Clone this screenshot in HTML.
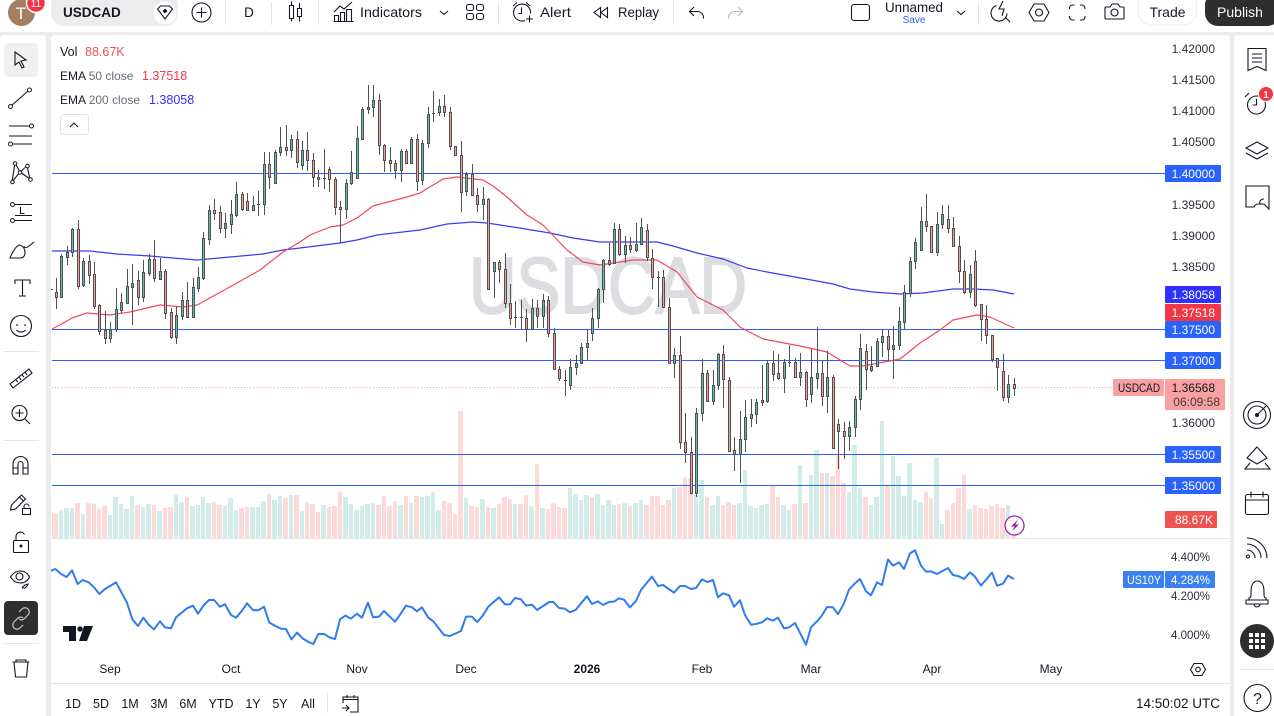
<!DOCTYPE html>
<html lang="en"><head><meta charset="utf-8"><title>USDCAD</title>
<style>
html,body{margin:0;padding:0;width:1274px;height:716px;overflow:hidden;background:#ececec}
svg{display:block}
text{font-family:"Liberation Sans",sans-serif;fill:#131722;font-size:12px}
.i{fill:none;stroke:#131722;stroke-width:1.1}
.n{fill:#fff;stroke:#131722;stroke-width:1}
.t{font-size:14px}
.tag{fill:#fff;font-size:12px;text-anchor:end}
.ax{text-anchor:end;font-size:12px;fill:#2a2e39}
.b{font-size:12.5px;text-anchor:middle}
.xl{font-size:12px;text-anchor:middle}
.lv{font-size:12.5px}
</style></head><body>
<svg width="1274" height="716" viewBox="0 0 1274 716" xmlns="http://www.w3.org/2000/svg">
<rect width="1274" height="716" fill="#ececec"/>
<rect width="1274" height="32" fill="#fff"/>
<rect x="0" y="35" width="46" height="690" rx="4" fill="#fff"/>
<rect x="51" y="35" width="1179" height="690" rx="4" fill="#fff"/>
<rect x="1234" y="35" width="48" height="690" rx="4" fill="#fff"/>

<!-- watermark -->
<text x="469" y="313" textLength="278" lengthAdjust="spacingAndGlyphs" style="font-size:80px;fill:#dcdde0;stroke:#dcdde0;stroke-width:2">USDCAD</text>

<!-- volume -->
<path fill="#d2ede9" d="M59 510h4V538h-4zM64 508h5V538h-5zM70 508h4V538h-4zM81 514h4V538h-4zM108 515h4V538h-4zM113 497h5V538h-5zM119 504h4V538h-4zM124 509h5V538h-5zM130 496h4V538h-4zM141 507h4V538h-4zM146 504h5V538h-5zM157 511h5V538h-5zM174 494h4V538h-4zM179 502h5V538h-5zM190 506h5V538h-5zM196 505h4V538h-4zM201 497h4V538h-4zM206 503h5V538h-5zM223 506h4V538h-4zM228 498h5V538h-5zM234 510h4V538h-4zM250 507h5V538h-5zM256 507h4V538h-4zM261 501h5V538h-5zM272 500h5V538h-5zM278 496h4V538h-4zM289 495h4V538h-4zM300 511h4V538h-4zM321 505h5V538h-5zM343 497h5V538h-5zM349 504h4V538h-4zM354 510h5V538h-5zM360 506h4V538h-4zM365 504h5V538h-5zM371 503h4V538h-4zM398 505h5V538h-5zM409 503h4V538h-4zM420 497h4V538h-4zM425 496h5V538h-5zM431 492h4V538h-4zM436 510h5V538h-5zM464 498h4V538h-4zM480 499h5V538h-5zM491 508h5V538h-5zM513 504h4V538h-4zM529 506h5V538h-5zM540 508h5V538h-5zM568 488h4V538h-4zM573 494h5V538h-5zM579 500h4V538h-4zM584 495h5V538h-5zM595 494h5V538h-5zM601 505h4V538h-4zM606 500h5V538h-5zM612 505h4V538h-4zM622 503h5V538h-5zM633 503h5V538h-5zM639 500h4V538h-4zM672 488h4V538h-4zM694 495h4V538h-4zM699 480h5V538h-5zM710 505h5V538h-5zM716 496h4V538h-4zM737 503h5V538h-5zM743 470h4V538h-4zM748 506h5V538h-5zM754 508h4V538h-4zM759 505h5V538h-5zM765 504h4V538h-4zM781 505h5V538h-5zM787 510h4V538h-4zM798 465h4V538h-4zM809 475h4V538h-4zM814 450h5V538h-5zM825 473h4V538h-4zM847 492h4V538h-4zM852 445h5V538h-5zM858 488h4V538h-4zM869 505h4V538h-4zM874 497h5V538h-5zM880 421h4V538h-4zM891 456h4V538h-4zM896 476h5V538h-5zM902 496h4V538h-4zM907 463h5V538h-5zM913 500h4V538h-4zM918 502h5V538h-5zM934 458h5V538h-5zM940 524h4V538h-4zM967 509h5V538h-5zM1006 505h4V538h-4z"/>
<path fill="#fcdad9" d="M52 512h1V538h-1zM53 514h5V538h-5zM75 503h5V538h-5zM86 503h5V538h-5zM92 504h4V538h-4zM97 509h4V538h-4zM102 506h5V538h-5zM135 505h5V538h-5zM152 505h4V538h-4zM163 508h4V538h-4zM168 507h5V538h-5zM185 497h4V538h-4zM212 502h4V538h-4zM217 505h5V538h-5zM239 508h5V538h-5zM245 507h4V538h-4zM267 494h4V538h-4zM283 498h5V538h-5zM294 495h5V538h-5zM305 502h4V538h-4zM310 504h5V538h-5zM316 512h4V538h-4zM327 507h4V538h-4zM332 506h5V538h-5zM338 492h4V538h-4zM376 505h5V538h-5zM382 496h4V538h-4zM387 506h5V538h-5zM393 501h4V538h-4zM404 496h4V538h-4zM414 496h5V538h-5zM442 501h4V538h-4zM447 503h5V538h-5zM453 514h4V538h-4zM458 411h5V538h-5zM469 506h5V538h-5zM475 507h4V538h-4zM486 507h4V538h-4zM497 504h4V538h-4zM502 497h5V538h-5zM508 499h4V538h-4zM518 504h5V538h-5zM524 495h4V538h-4zM535 464h4V538h-4zM546 509h4V538h-4zM551 503h5V538h-5zM557 507h4V538h-4zM562 508h5V538h-5zM590 497h4V538h-4zM617 504h4V538h-4zM628 506h4V538h-4zM644 505h5V538h-5zM650 496h4V538h-4zM655 496h5V538h-5zM661 505h4V538h-4zM666 500h5V538h-5zM677 487h5V538h-5zM683 477h4V538h-4zM688 479h5V538h-5zM705 497h4V538h-4zM721 505h4V538h-4zM726 502h5V538h-5zM732 505h4V538h-4zM770 485h5V538h-5zM776 497h4V538h-4zM792 504h5V538h-5zM803 503h5V538h-5zM820 473h4V538h-4zM830 476h5V538h-5zM836 456h4V538h-4zM841 483h5V538h-5zM863 497h5V538h-5zM885 485h5V538h-5zM924 492h4V538h-4zM929 498h4V538h-4zM945 510h5V538h-5zM951 503h4V538h-4zM956 488h5V538h-5zM962 475h4V538h-4zM973 505h4V538h-4zM978 508h5V538h-5zM984 509h4V538h-4zM989 506h5V538h-5zM995 504h4V538h-4zM1000 508h5V538h-5zM1011 534h5V538h-5z"/>

<!-- horizontal lines -->
<path stroke="#2962ff" stroke-width="1" fill="none" d="M52 173.5H1165M52 329.5H1165M52 360.5H1165M52 454.5H1165M52 485.5H1165"/>
<path stroke="#f5a5a5" stroke-width="1" stroke-dasharray="1 2" fill="none" d="M52 387.5H1112"/>
<path stroke="#e4e5e8" stroke-width="1" fill="none" d="M51 538.5H1230M51 683.5H1230"/>

<!-- EMAs -->
<polyline fill="none" stroke="#3a3af5" stroke-width="1.2" stroke-linejoin="round" points="52,251 90,251 117,254 150,256 173,258 197,260 230,257 263,254 283,250 300,248 340,243 357,240 377,235 420,230 447,224 473,222 487,223 513,227 550,233 573,238 600,242 657,242 673,246 697,253 723,259 747,268 767,272 817,281 833,284 850,289 873,292 900,294 923,293 953,289 973,289 993,290 1014,294"/>
<polyline fill="none" stroke="#f2475a" stroke-width="1.2" stroke-linejoin="round" points="52,329 60,325 72,318 87,313 110,315 130,312 160,305 183,307 197,305 217,294 237,283 260,270 283,252 300,242 310,235 330,227 343,225 357,218 373,206 407,197 420,193 443,179 457,177 483,180 493,186 507,197 527,215 543,225 567,250 583,262 600,265 633,260 657,260 677,272 697,297 723,310 740,327 763,339 800,346 827,352 850,366 863,366 900,359 920,343 940,330 953,320 977,315 990,317 1014,328"/>

<!-- candle wicks -->
<path stroke="#505050" stroke-width="1" fill="none" d="M56.5 278V309M61.5 254V298M67.5 246V265M72.5 228V257M78.5 220V289M83.5 258V287M89.5 255V284M94.5 262V309M99.5 304V335M105.5 311V344M110.5 322V343M116.5 288V332M121.5 293V313M127.5 269V303M132.5 264V325M138.5 271V305M143.5 260V302M149.5 254V276M154.5 240V282M160.5 258V280M165.5 269V319M171.5 308V339M176.5 307V344M182.5 292V320M187.5 282V317M193.5 278V317M198.5 267V292M203.5 232V280M209.5 205V245M214.5 199V220M220.5 206V233M225.5 213V238M231.5 200V234M236.5 182V217M242.5 192V211M247.5 193V210M253.5 196V211M258.5 191V216M264.5 152V215M269.5 152V189M275.5 150V184M280.5 127V156M286.5 125V156M291.5 135V158M297.5 131V168M302.5 141V170M307.5 132V171M313.5 153V187M318.5 170V187M324.5 149V189M329.5 167V192M335.5 177V215M340.5 201V243M346.5 179V219M351.5 151V185M357.5 126V178M362.5 107V139M368.5 85V114M373.5 85V117M379.5 94V155M384.5 144V172M390.5 147V172M395.5 160V179M401.5 149V182M406.5 149V164M411.5 137V163M417.5 134V191M422.5 140V185M428.5 107V148M433.5 91V122M439.5 99V116M444.5 95V117M450.5 107V150M455.5 146V155M461.5 141V212M466.5 172V196M472.5 164V196M477.5 188V212M483.5 187V220M488.5 198V289M494.5 262V298M499.5 260V283M505.5 253V308M510.5 284V325M515.5 301V328M521.5 300V329M526.5 309V342M532.5 299V329M537.5 300V328M543.5 294V328M548.5 296V337M554.5 328V369M559.5 366V381M565.5 370V396M570.5 359V390M576.5 355V375M581.5 343V364M587.5 330V360M592.5 308V341M598.5 288V328M603.5 259V303M609.5 243V266M614.5 223V264M619.5 224V256M625.5 236V263M630.5 237V253M636.5 223V252M641.5 218V245M647.5 224V261M652.5 249V289M658.5 271V307M663.5 270V307M669.5 298V364M674.5 348V378M680.5 336V449M685.5 413V463M691.5 437V494M696.5 408V497M702.5 359V421M707.5 370V402M713.5 370V405M718.5 353V390M723.5 345V408M729.5 377V452M734.5 437V471M740.5 411V483M745.5 400V452M751.5 399V427M756.5 399V424M762.5 365V406M767.5 360V403M773.5 351V381M778.5 354V380M784.5 359V393M789.5 345V367M795.5 358V377M800.5 353V386M806.5 371V407M811.5 349V403M817.5 327V389M822.5 361V406M827.5 351V413M833.5 375V448M838.5 419V469M844.5 422V459M849.5 421V451M855.5 396V437M860.5 334V410M866.5 344V390M871.5 346V372M877.5 338V367M882.5 329V357M888.5 330V361M893.5 326V379M899.5 307V350M904.5 285V329M910.5 257V297M915.5 238V269M921.5 207V250M926.5 194V232M931.5 226V252M937.5 212V256M942.5 205V229M948.5 205V233M953.5 217V246M959.5 236V283M964.5 260V294M970.5 265V298M975.5 250V307M981.5 304V341M986.5 305V344M992.5 335V362M997.5 358V391M1003.5 354V401M1008.5 375V403M1014.5 378V396"/>
<path stroke="#505050" stroke-width="1" fill="none" d="M51 289.5h2M257 204.5h3M323 178.5h3M432 113.5h3M514 317.5h3M520 317.5h3M564 380.5h3M657 277.5h3M788 362.5h3"/>
<!-- up bodies -->
<path fill="#5cbfaa" stroke="#505050" stroke-width="1" d="M60.5 256.5h2v41h-2zM66.5 252.5h2v5h-2zM71.5 229.5h2v23h-2zM82.5 261.5h2v24h-2zM109.5 329.5h2v9h-2zM115.5 309.5h2v20h-2zM120.5 302.5h2v8h-2zM126.5 286.5h2v17h-2zM131.5 283.5h2v4h-2zM142.5 272.5h2v25h-2zM148.5 259.5h2v14h-2zM159.5 271.5h2v8h-2zM175.5 315.5h2v22h-2zM181.5 300.5h2v16h-2zM192.5 287.5h2v30h-2zM197.5 277.5h2v11h-2zM202.5 238.5h2v40h-2zM208.5 210.5h2v29h-2zM224.5 223.5h2v5h-2zM230.5 214.5h2v10h-2zM235.5 194.5h2v21h-2zM252.5 205.5h2v5h-2zM263.5 164.5h2v40h-2zM274.5 152.5h2v31h-2zM279.5 147.5h2v5h-2zM290.5 139.5h2v11h-2zM301.5 150.5h2v15h-2zM345.5 183.5h2v26h-2zM350.5 172.5h2v11h-2zM356.5 138.5h2v40h-2zM361.5 109.5h2v30h-2zM367.5 107.5h2v2h-2zM372.5 100.5h2v7h-2zM400.5 151.5h2v19h-2zM410.5 139.5h2v24h-2zM421.5 143.5h2v37h-2zM427.5 114.5h2v29h-2zM438.5 106.5h2v6h-2zM465.5 174.5h2v17h-2zM482.5 199.5h2v5h-2zM493.5 262.5h2v9h-2zM531.5 308.5h2v21h-2zM542.5 300.5h2v16h-2zM569.5 367.5h2v18h-2zM575.5 363.5h2v4h-2zM580.5 347.5h2v16h-2zM586.5 343.5h2v4h-2zM591.5 318.5h2v15h-2zM597.5 289.5h2v29h-2zM602.5 260.5h2v29h-2zM613.5 229.5h2v34h-2zM624.5 245.5h2v9h-2zM635.5 244.5h2v6h-2zM640.5 227.5h2v17h-2zM673.5 355.5h2v8h-2zM695.5 413.5h2v80h-2zM701.5 373.5h2v40h-2zM712.5 385.5h2v16h-2zM717.5 354.5h2v31h-2zM739.5 439.5h2v15h-2zM744.5 417.5h2v22h-2zM750.5 414.5h2v4h-2zM755.5 402.5h2v12h-2zM761.5 400.5h2v2h-2zM766.5 363.5h2v38h-2zM783.5 362.5h2v16h-2zM799.5 372.5h2v5h-2zM810.5 377.5h2v17h-2zM816.5 373.5h2v5h-2zM826.5 377.5h2v19h-2zM848.5 427.5h2v9h-2zM854.5 399.5h2v28h-2zM859.5 348.5h2v51h-2zM870.5 366.5h2v4h-2zM876.5 341.5h2v25h-2zM881.5 336.5h2v6h-2zM892.5 345.5h2v4h-2zM898.5 321.5h2v24h-2zM903.5 292.5h2v30h-2zM909.5 261.5h2v32h-2zM914.5 242.5h2v19h-2zM920.5 221.5h2v29h-2zM936.5 224.5h2v28h-2zM941.5 214.5h2v10h-2zM969.5 274.5h2v18h-2zM1007.5 384.5h2v13h-2z"/>
<!-- down bodies -->
<path fill="#f79a9a" stroke="#505050" stroke-width="1" d="M55.5 292.5h2v5h-2zM77.5 229.5h2v57h-2zM88.5 261.5h2v14h-2zM93.5 274.5h2v32h-2zM98.5 305.5h2v26h-2zM104.5 330.5h2v8h-2zM137.5 280.5h2v17h-2zM153.5 259.5h2v19h-2zM164.5 271.5h2v42h-2zM170.5 312.5h2v25h-2zM186.5 300.5h2v17h-2zM213.5 210.5h2v3h-2zM219.5 212.5h2v16h-2zM241.5 194.5h2v15h-2zM246.5 201.5h2v9h-2zM268.5 164.5h2v13h-2zM285.5 147.5h2v3h-2zM296.5 139.5h2v23h-2zM306.5 150.5h2v10h-2zM312.5 160.5h2v17h-2zM317.5 177.5h2v2h-2zM328.5 169.5h2v10h-2zM334.5 179.5h2v28h-2zM339.5 207.5h2v2h-2zM378.5 100.5h2v45h-2zM383.5 145.5h2v15h-2zM389.5 160.5h2v3h-2zM394.5 163.5h2v7h-2zM405.5 151.5h2v12h-2zM416.5 139.5h2v42h-2zM443.5 106.5h2v6h-2zM449.5 112.5h2v34h-2zM454.5 146.5h2v9h-2zM460.5 155.5h2v37h-2zM471.5 174.5h2v21h-2zM476.5 195.5h2v9h-2zM487.5 199.5h2v90h-2zM498.5 262.5h2v7h-2zM504.5 269.5h2v34h-2zM509.5 303.5h2v15h-2zM525.5 318.5h2v11h-2zM536.5 308.5h2v8h-2zM547.5 300.5h2v33h-2zM553.5 333.5h2v36h-2zM558.5 369.5h2v9h-2zM608.5 260.5h2v4h-2zM618.5 229.5h2v25h-2zM629.5 245.5h2v4h-2zM646.5 230.5h2v27h-2zM651.5 258.5h2v19h-2zM662.5 277.5h2v30h-2zM668.5 307.5h2v56h-2zM679.5 355.5h2v87h-2zM684.5 442.5h2v10h-2zM690.5 452.5h2v41h-2zM706.5 373.5h2v28h-2zM722.5 354.5h2v25h-2zM728.5 380.5h2v71h-2zM733.5 450.5h2v4h-2zM772.5 363.5h2v11h-2zM777.5 373.5h2v5h-2zM794.5 362.5h2v15h-2zM805.5 372.5h2v27h-2zM821.5 373.5h2v23h-2zM832.5 377.5h2v71h-2zM837.5 424.5h2v7h-2zM843.5 431.5h2v5h-2zM865.5 351.5h2v18h-2zM887.5 336.5h2v13h-2zM925.5 221.5h2v5h-2zM930.5 226.5h2v26h-2zM947.5 219.5h2v9h-2zM952.5 228.5h2v18h-2zM958.5 246.5h2v25h-2zM963.5 271.5h2v21h-2zM974.5 261.5h2v44h-2zM980.5 304.5h2v15h-2zM985.5 319.5h2v16h-2zM991.5 335.5h2v24h-2zM996.5 358.5h2v9h-2zM1002.5 371.5h2v26h-2zM1013.5 384.5h2v4h-2z"/>

<!-- US10Y -->
<g transform="translate(50 540) scale(.33333)" fill="none" stroke="#2f7cf0" stroke-width="6" stroke-linejoin="round">
<polyline points="3,92 16,87 33,102 50,111 66,91 83,132 98,120 116,127 133,143 148,162 165,147 198,127 231,188 247,238 264,258 280,233 297,255 312,268 330,244 345,262 363,265 378,232 411,205 429,197 444,221 462,195 477,180 492,180 510,200 525,193 543,225 558,233 576,212 591,190 609,210 625,211 642,200 658,248 676,258 693,266 708,267 724,298 741,278 759,296 774,305 790,312 805,282 822,282 838,292 855,297 870,238 886,227 903,236 921,221 936,233 954,188 969,232 987,230 1002,213 1035,245 1053,220 1068,197 1086,202 1101,214 1116,202 1134,232 1150,244 1182,285 1200,288 1233,273 1248,230 1266,230 1282,246 1299,226 1315,200 1347,172 1365,193 1380,193 1395,174 1413,178 1428,197 1446,194 1461,210 1498,186 1510,186 1527,204 1544,206 1560,217 1578,209 1593,190 1611,169 1626,192 1644,184 1659,195 1677,186 1692,185 1707,175 1722,179 1740,202 1758,183 1773,150 1806,110 1824,138 1839,135 1872,158 1890,138 1905,138 1923,147 1938,144 1956,118 1972,126 1989,120 2004,172 2019,160 2037,166 2052,200 2070,181 2085,225 2103,254 2118,252 2136,247 2151,235 2169,242 2184,233 2202,265 2217,262 2235,249 2268,314 2283,262 2301,244 2316,226 2331,201 2349,202 2364,223 2382,190 2397,149 2415,130 2430,117 2448,154 2463,166 2481,127 2496,135 2514,58 2529,77 2547,67 2562,87 2580,40 2595,31 2613,77 2628,95 2643,94 2661,102 2694,84 2709,105 2727,109 2742,117 2760,97 2775,110 2793,137 2826,98 2841,137 2859,131 2874,107 2892,117"/>
</g>

<!-- TV logo -->
<path fill="#131722" d="M63 626h13v15h-7v-9h-6zM84 626h9l-6 15h-8z"/><circle cx="80" cy="629" r="2.700" fill="#131722"/>

<!-- Legend -->
<text x="60" y="56" class="lv">Vol</text><text x="85" y="56" class="lv" style="fill:#ef5350">88.67K</text>
<text x="60" y="80">EMA <tspan style="fill:#6a6d78">50 close</tspan></text><text x="142" y="80" class="lv" style="fill:#f23645">1.37518</text>
<text x="60" y="104">EMA <tspan style="fill:#6a6d78">200 close</tspan></text><text x="149" y="104" class="lv" style="fill:#3030ff">1.38058</text>
<rect x="60.5" y="114.5" width="28" height="20" rx="3" fill="#fff" stroke="#e0e3eb"/>
<path class="i" d="M70 127l4-4 4 4"/>

<!-- Price axis -->
<text class="ax" x="1215" y="53">1.42000</text><text class="ax" x="1215" y="84">1.41500</text><text class="ax" x="1215" y="115">1.41000</text><text class="ax" x="1215" y="146">1.40500</text><text class="ax" x="1215" y="209">1.39500</text><text class="ax" x="1215" y="240">1.39000</text><text class="ax" x="1215" y="271">1.38500</text><text class="ax" x="1215" y="427">1.36000</text>
<rect x="1165" y="165" width="56" height="17" rx="1" fill="#2962ff"/><text class="tag" x="1215" y="178">1.40000</text>
<rect x="1165" y="286" width="56" height="17" rx="1" fill="#3030ff"/><text class="tag" x="1215" y="299">1.38058</text>
<rect x="1165" y="304" width="56" height="17" rx="1" fill="#f23645"/><text class="tag" x="1215" y="317">1.37518</text>
<rect x="1165" y="321" width="56" height="17" rx="1" fill="#2962ff"/><text class="tag" x="1215" y="334">1.37500</text>
<rect x="1165" y="352" width="56" height="17" rx="1" fill="#2962ff"/><text class="tag" x="1215" y="365">1.37000</text>
<rect x="1165" y="446" width="56" height="17" rx="1" fill="#2962ff"/><text class="tag" x="1215" y="459">1.35500</text>
<rect x="1165" y="477" width="56" height="17" rx="1" fill="#2962ff"/><text class="tag" x="1215" y="490">1.35000</text>
<rect x="1165" y="511" width="52" height="17" rx="1" fill="#ef5350"/><text class="tag" x="1213" y="524">88.67K</text>
<rect x="1113" y="379" width="51" height="17" rx="1" fill="#f9a0a0"/><text x="1118" y="392" textLength="42" lengthAdjust="spacingAndGlyphs">USDCAD</text>
<rect x="1165" y="379" width="60" height="31" rx="1" fill="#f9a0a0"/><text x="1215" y="392" style="text-anchor:end">1.36568</text><text x="1220" y="406" style="text-anchor:end;fill:#4a3a3a">06:09:58</text>

<text class="ax" x="1210" y="561" style="font-size:11.5px">4.400%</text><text class="ax" x="1210" y="600" style="font-size:11.5px">4.200%</text><text class="ax" x="1210" y="639" style="font-size:11.5px">4.000%</text>
<rect x="1123" y="571" width="41" height="17" rx="1" fill="#3a80f0"/><text x="1127" y="584" textLength="34" lengthAdjust="spacingAndGlyphs" style="fill:#fff">US10Y</text>
<rect x="1165" y="571" width="50" height="17" rx="1" fill="#3a80f0"/><text x="1210" y="584" style="fill:#fff;text-anchor:end;font-size:11.5px">4.284%</text>

<!-- lightning -->
<circle cx="1014.5" cy="525.5" r="9.5" fill="#fff" stroke="#9c27b0" stroke-width="1.3"/>
<path fill="#9c27b0" d="M1018 519.500l-7 7h3.500l-2.500 5 7-7h-3.500z"/>

<!-- Time axis -->
<text class="xl" x="110" y="673">Sep</text><text class="xl" x="231" y="673">Oct</text><text class="xl" x="357" y="673">Nov</text><text class="xl" x="466" y="673">Dec</text><text class="xl" x="587" y="673" style="font-weight:bold">2026</text><text class="xl" x="702" y="673">Feb</text><text class="xl" x="811" y="673">Mar</text><text class="xl" x="932" y="673">Apr</text><text class="xl" x="1051" y="673">May</text>
<path class="i" d="M1190.500 669.500l3.500-6h8l3.500 6-3.500 6h-8z"/><circle class="i" cx="1198" cy="669.500" r="2.300"/>

<!-- Bottom bar -->
<text class="b" x="73" y="708">1D</text><text class="b" x="101" y="708">5D</text><text class="b" x="130" y="708">1M</text><text class="b" x="159" y="708">3M</text><text class="b" x="188" y="708">6M</text><text class="b" x="221" y="708">YTD</text><text class="b" x="253" y="708">1Y</text><text class="b" x="280" y="708">5Y</text><text class="b" x="308" y="708">All</text>
<path stroke="#e4e5e8" d="M327.500 693V713" fill="none"/>
<path class="i" d="M343 703V697h15v15h-8M343 699.500h15M347 695v3M354 695v3M342 708h7M346 705l3 3-3 3"/>
<text x="1220" y="708" style="text-anchor:end;font-size:13.500px">14:50:02 UTC</text>

<!-- Top toolbar -->
<circle cx="21.500" cy="12.500" r="13.500" fill="#a47d62"/><text x="21" y="19" style="fill:#fff;font-size:17px;text-anchor:middle">T</text>
<circle cx="36" cy="3" r="9.500" fill="#f23645" stroke="#fff" stroke-width="1.500"/><text x="36" y="7" style="fill:#fff;font-size:10px;text-anchor:middle">11</text>
<rect x="51" y="-8" width="127" height="34" rx="13" fill="#ececec"/>
<text x="63" y="17" style="font-size:13.500px;font-weight:bold">USDCAD</text>
<circle cx="165" cy="13" r="11.500" fill="#fff"/>
<path class="i" d="M157.500 9l3-3h9l3 3-7.500 10z"/><path d="M165 8.500l2.500 2.500-2.500 2.500-2.500-2.500z" fill="#131722"/>
<circle class="i" cx="201.500" cy="12.500" r="9.500"/><path class="i" d="M201.500 7.500v10M196.500 12.500h10"/>
<path stroke="#e4e5e8" fill="none" d="M225.500 2V25M271.500 2V25M318.500 2V25M498.500 2V25M673.500 2V25M978.500 2V25"/>
<text x="249" y="17" style="font-size:13.500px;text-anchor:middle">D</text>
<path class="i" d="M289.500 5.500h4v13h-4zM291.500 1.500v4M291.500 18.500v3M297.500 8.500h4v8h-4zM299.500 3v5.500M299.500 16.500v5"/>
<path class="i" d="M333.500 21.500h20M334.500 21.500v-6h4v6M340.500 21.500v-9h4v9M346.500 21.500v-12h5v12M334 12l6-6 4 3 8-7"/>
<text x="360" y="17" textLength="62" lengthAdjust="spacingAndGlyphs" style="font-size:14px">Indicators</text>
<path class="i" d="M440 11l4 3.500 4-3.500"/>
<path class="i" d="M466.500 6.500a2 2 0 0 1 2-2h3a2 2 0 0 1 2 2v2a2 2 0 0 1-2 2h-3a2 2 0 0 1-2-2zM476.500 6.500a2 2 0 0 1 2-2h3a2 2 0 0 1 2 2v2a2 2 0 0 1-2 2h-3a2 2 0 0 1-2-2zM466.500 15.500a2 2 0 0 1 2-2h3a2 2 0 0 1 2 2v2a2 2 0 0 1-2 2h-3a2 2 0 0 1-2-2zM476.500 15.500a2 2 0 0 1 2-2h3a2 2 0 0 1 2 2v2a2 2 0 0 1-2 2h-3a2 2 0 0 1-2-2z"/>
<path class="i" d="M525 20.500a8.500 8.500 0 1 1 5.500-7M521.500 7.500v6h-3M513 6l4-3.500M526 2.500l4 3.500M529.500 15.500v7M526 19h7"/>
<text x="540" y="17" textLength="31" lengthAdjust="spacingAndGlyphs" style="font-size:14px">Alert</text>
<path class="i" d="M600.500 7.500l-6.500 5 6.500 5zM607.500 7.500l-6.500 5 6.500 5z"/>
<text x="618" y="17" textLength="41" lengthAdjust="spacingAndGlyphs" style="font-size:14px">Replay</text>
<path class="i" d="M694 7l-4.500 4.500 4.500 4.500M689.500 11.500h8a6 6 0 0 1 6 6v1"/>
<path d="M738 7l4.500 4.500-4.500 4.500M742.500 11.500h-8a6 6 0 0 0-6 6v1" fill="none" stroke="#b2b5be" stroke-width="1.100"/>
<rect class="i" x="851.500" y="4.500" width="18" height="16" rx="2.500"/>
<text x="885" y="12" textLength="58" lengthAdjust="spacingAndGlyphs" style="font-size:14px">Unnamed</text>
<text x="914" y="23" style="font-size:10px;fill:#2962ff;text-anchor:middle">Save</text>
<path class="i" d="M957 11l4 3.500 4-3.500"/>
<path class="i" d="M996.500 5.500a8 8 0 1 0 10.500 8M1005 17l5 5M1003 1l-4 8h5l-2 7"/>
<path class="i" d="M1034 4h10l5 8.500-5 8.500h-10l-5-8.500z"/><circle class="i" cx="1039" cy="12.500" r="3.500"/>
<path class="i" d="M1069.500 9V8a3 3 0 0 1 3-3h2M1080 5h2a3 3 0 0 1 3 3v1M1085 16v1a3 3 0 0 1-3 3h-2M1074.500 20h-2a3 3 0 0 1-3-3v-1"/>
<path class="i" d="M1106 7h4l2-3h6l2 3h3a1 1 0 0 1 1 1v10a1 1 0 0 1-1 1h-17a1 1 0 0 1-1-1V8a1 1 0 0 1 1-1z"/><circle class="i" cx="1114.500" cy="12.500" r="3.500"/>
<rect x="1138.500" y="-8" width="58" height="33" rx="13" fill="#fff" stroke="#ececec"/>
<text x="1167.500" y="17" style="font-size:14px;text-anchor:middle">Trade</text>
<rect x="1205" y="-8" width="75" height="34" rx="13" fill="#2e2e2e"/>
<text x="1240" y="17" style="fill:#fff;font-size:14px;text-anchor:middle">Publish</text>

<!-- Left toolbar -->
<rect x="4" y="43" width="34" height="34" rx="4" fill="#f0f0f0"/>
<path class="i" d="M15 52l11 8-5 1 3 6-2 1-3-6-4 3z"/>
<path class="i" d="M11 106L28 91"/><circle class="n" cx="10.500" cy="106.500" r="2"/><circle class="n" cx="29.500" cy="90" r="2"/>
<path class="i" d="M9 126h21M9 136h23M9 144h23"/><circle class="n" cx="31.500" cy="126" r="2"/><circle class="n" cx="10.500" cy="144" r="2"/>
<path class="i" d="M15 163l-3 19M27 166l3 13M15 163l5 9M27 166l-7 6M20 172l-8 10M20 172l10 7"/><circle class="n" cx="15" cy="163.500" r="1.800"/><circle class="n" cx="27.500" cy="166" r="1.800"/><circle class="n" cx="20" cy="172.500" r="1.800"/><circle class="n" cx="12.500" cy="182" r="1.800"/><circle class="n" cx="30.500" cy="179.500" r="1.800"/>
<path class="i" d="M15 204.500h17M15 215.500h17M15 220.500h17M20.500 207v6.500h4"/><circle class="n" cx="12.500" cy="204.500" r="2"/><circle class="n" cx="12.500" cy="220.500" r="2"/>
<path class="i" d="M10 258h11a5 5 0 0 0 4-5c0-6-4-8-6-8-4 2-7 8-9 13zM24 246c1 3 3 2 10-4"/>
<path class="i" d="M15 284v-4h15v4M22.500 280v16M19 296h7"/>
<circle class="i" cx="21" cy="326" r="10.500"/><path class="i" d="M17 324v2M25 324v2M16.500 330a6 6 0 0 0 9 0"/>
<path stroke="#e4e5e8" fill="none" d="M3 351.500H39M3 440.500H39M3 643.500H39"/>
<path class="i" d="M10 384l19-15 3 4-19 15-3-4zM16 380l2 2M19 377l2 3M22 375l2 2M25 372l2 3"/>
<circle class="i" cx="19.500" cy="413" r="7.500"/><path class="i" d="M25 419l5 5M19.500 409v8M15.500 413h8"/>
<path class="i" d="M13 474v-10a7 7 0 0 1 15 0v10h-5v-10a2.500 2.500 0 0 0-5 0v10zM13 468h5M23 468h5"/>
<path class="i" d="M10.500 510l1-5 10-10 4 4-10 10zM19.500 497l4 4"/>
<rect class="i" x="22.500" y="508.500" width="8" height="6"/><path class="i" d="M24 508.500v-2a2.500 2.500 0 0 1 5 0"/>
<rect class="i" x="13.500" y="540.500" width="15" height="12" rx="1"/><path class="i" d="M16 540.500v-4a4.500 4.500 0 0 1 8.500-2"/><circle cx="21" cy="546" r="1.500" fill="#131722"/>
<path class="i" d="M10.500 577c5-8 15-8 19 0-4 8-14 8-19 0z"/><circle class="i" cx="19.500" cy="576.500" r="3.500"/><path class="i" d="M22 588c2-3 5-4 7-4M22 588h3l3-3"/>
<rect x="4" y="601" width="34" height="34" rx="4" fill="#2e2e2e"/>
<path d="M19 612l3-3a4 4 0 0 1 6 6l-4 4a4 4 0 0 1-5 0M23 625l-3 3a4 4 0 0 1-6-6l4-4a4 4 0 0 1 5 0" fill="none" stroke="#c8c8c8" stroke-width="1.200"/>
<path class="i" d="M12.500 662h17M16 662v-2h10v2M14 662l1.500 15h11L28 662"/>

<!-- Right toolbar -->
<path class="i" d="M1248 48.500h18v22l-9-4-9 4zM1252 54h10M1252 58h10M1252 62h10"/>
<circle class="i" cx="1256.500" cy="105" r="9"/><path class="i" d="M1256.500 99v6h-4M1245 97l4-4"/>
<circle cx="1266" cy="94" r="7.500" fill="#f23645" stroke="#fff"/><text x="1266" y="98" style="fill:#fff;font-size:10px;font-weight:bold;text-anchor:middle">1</text>
<path class="i" d="M1246 148l11-6 11 6-11 6zM1246 153l11 6 11-6"/>
<path class="i" d="M1246 186h23v23l-5-5h-6c-2 0-3 1-4 3h-8z"/><path class="i" d="M1260 204c-1-3 1-5 4-5"/>
<circle class="i" cx="1257" cy="415" r="13.500"/><circle class="i" cx="1257" cy="415" r="9"/><circle cx="1257" cy="415" r="2" fill="#131722"/><path class="i" d="M1257 415l9-9"/>
<path class="i" d="M1257 447l10 11-10 6-10-6zM1250 463l-5 6h25l-5-6"/>
<rect class="i" x="1245.500" y="494.500" width="23" height="20" rx="2"/><path class="i" d="M1245.500 500h23M1251 491.500v6M1263 491.500v6"/>
<path class="i" d="M1247 538a20 20 0 0 1 20 20M1247 544a14 14 0 0 1 14 14M1247 550a8 8 0 0 1 8 8"/><circle class="i" cx="1248" cy="556.500" r="1.500"/>
<path class="i" d="M1249 600h17v-2c-2 0-2-2-2-6 0-8-3-11-6.500-11s-6.500 3-6.500 11c0 4 0 6-2 6zM1246 600h22v4h-22zM1254 604a3 3 0 0 0 6 0"/>
<circle cx="1257" cy="641" r="17" fill="#2e2e2e"/>
<path fill="#fff" d="M1249 633h4v4h-4zM1255 633h4v4h-4zM1261 633h4v4h-4zM1249 639h4v4h-4zM1255 639h4v4h-4zM1261 639h4v4h-4zM1249 645h4v4h-4zM1255 645h4v4h-4zM1261 645h4v4h-4z"/>
<path stroke="#e4e5e8" fill="none" d="M1240 669.500H1274"/>
<circle class="i" cx="1257.500" cy="698" r="13.500"/><text x="1257.500" y="704" style="font-size:16px;text-anchor:middle">?</text>
</svg>
</body></html>
